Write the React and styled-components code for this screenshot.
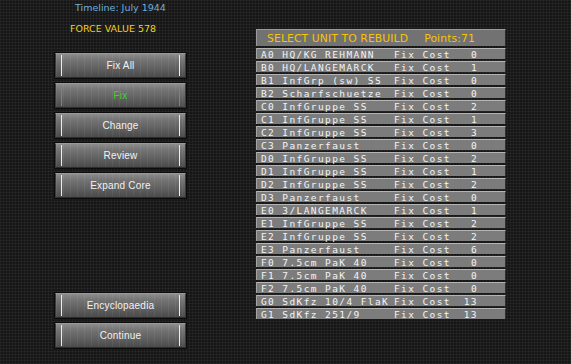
import React from 'react';
import styled, { createGlobalStyle } from 'styled-components';

const GlobalStyle = createGlobalStyle`
    html, body {
        margin: 0;
        padding: 0;
        background: #151515;
    }
`;

const Screen = styled.div`
    width: 571px;
    height: 364px;
    display: flex;
    align-items: flex-start;
    overflow: hidden;
    background-color: #161616;
    background-image:
        repeating-linear-gradient(0deg, rgba(255,255,255,0.045) 0 1px, transparent 1px 3px),
        repeating-linear-gradient(90deg, rgba(255,255,255,0.045) 0 1px, transparent 1px 3px);
    font-family: "DejaVu Sans", "Liberation Sans", sans-serif;
`;

const SideColumn = styled.div`
    width: 131px;
    margin-left: 55px;
    display: flex;
    flex-direction: column;
`;

const Timeline = styled.div`
    margin-top: 2px;
    margin-left: 20px;
    height: 12px;
    font-size: 9.5px;
    line-height: 12px;
    color: #6eaedc;
`;

const ForceValue = styled.div`
    margin-top: 9px;
    margin-left: 15px;
    height: 12px;
    font-size: 9.5px;
    line-height: 12px;
    color: #f2d21a;
`;

const ButtonStack = styled.div`
    display: flex;
    flex-direction: column;
    gap: 5px;
    margin-top: ${p => p.$top}px;
`;

const MenuButton = styled.div`
    position: relative;
    height: 25px;
    box-sizing: border-box;
    display: flex;
    align-items: center;
    justify-content: center;
    font-family: "Liberation Sans", "DejaVu Sans", sans-serif;
    font-size: 10px;
    letter-spacing: 0.2px;
    color: ${p => (p.$active ? '#2ed82e' : '#f2f2f2')};
    background-color: #666;
    background-image:
        repeating-linear-gradient(90deg, rgba(255,255,255,0.05) 0 1px, transparent 1px 7px),
        linear-gradient(180deg, #8c8c8c 0%, #747474 25%, #5c5c5c 70%, #4a4a4a 100%);
    border-top: 1px solid #9a9a9a;
    border-bottom: 1px solid #2c2c2c;
    border-left: 1px solid #3a3a3a;
    border-right: 1px solid #3a3a3a;
    box-shadow: 0 0 0 1px #0c0c0c;

    &::before, &::after {
        content: '';
        position: absolute;
        top: 1px;
        bottom: 1px;
        width: 1px;
        background: ${p => (p.$active ? '#22c422' : '#ececec')};
    }
    &::before { left: 5px; }
    &::after { right: 5px; }
`;

const Panel = styled.div`
    margin-left: 70px;
    margin-top: 29px;
    width: 250px;
    display: flex;
    flex-direction: column;
    gap: 2px;
`;

const TitleBar = styled.div`
    height: 17px;
    box-sizing: border-box;
    display: flex;
    align-items: center;
    padding-left: 10px;
    background: #727272;
    border-top: 1px solid #9c9c9c;
    border-left: 1px solid #9c9c9c;
    border-right: 1px solid #2a2a2a;
    font-size: 10.8px;
    color: #f6c400;
    letter-spacing: 0.1px;
    white-space: pre;
`;

const Points = styled.span`
    margin-left: 16px;
`;

const Row = styled.div`
    height: 11px;
    box-sizing: border-box;
    display: flex;
    align-items: center;
    background: #7c7c7c;
    border-top: 1px solid #b4b4b4;
    border-left: 1px solid #a4a4a4;
    border-right: 1px solid #303030;
    font-family: "DejaVu Sans Mono", "Liberation Mono", monospace;
    font-size: 9.5px;
    color: #f4f4f4;
    letter-spacing: 1.4px;
    white-space: pre;
`;

const RowList = styled.div`
    display: flex;
    flex-direction: column;
    gap: 2px;
`;

const UnitName = styled.span`
    width: 137px;
    padding-left: 4px;
    box-sizing: border-box;
    overflow: hidden;
`;

const CostLabel = styled.span`
    width: 66px;
`;

const CostValue = styled.span`
    width: 18px;
    text-align: right;
`;

const units = [
    ['A0', 'HQ/KG REHMANN', 0],
    ['B0', 'HQ/LANGEMARCK', 1],
    ['B1', 'InfGrp (sw) SS', 0],
    ['B2', 'Scharfschuetze', 0],
    ['C0', 'InfGruppe SS', 2],
    ['C1', 'InfGruppe SS', 1],
    ['C2', 'InfGruppe SS', 3],
    ['C3', 'Panzerfaust', 0],
    ['D0', 'InfGruppe SS', 2],
    ['D1', 'InfGruppe SS', 1],
    ['D2', 'InfGruppe SS', 2],
    ['D3', 'Panzerfaust', 0],
    ['E0', '3/LANGEMARCK', 1],
    ['E1', 'InfGruppe SS', 2],
    ['E2', 'InfGruppe SS', 2],
    ['E3', 'Panzerfaust', 6],
    ['F0', '7.5cm PaK 40', 0],
    ['F1', '7.5cm PaK 40', 0],
    ['F2', '7.5cm PaK 40', 0],
    ['G0', 'SdKfz 10/4 FlaK', 13],
    ['G1', 'SdKfz 251/9', 13],
];

export default function App() {
    return (
        <Screen>
            <GlobalStyle />
            <SideColumn>
                <Timeline>Timeline: July 1944</Timeline>
                <ForceValue>FORCE VALUE 578</ForceValue>
                <ButtonStack $top={18}>
                    <MenuButton>Fix All</MenuButton>
                    <MenuButton $active>Fix</MenuButton>
                    <MenuButton>Change</MenuButton>
                    <MenuButton>Review</MenuButton>
                    <MenuButton>Expand Core</MenuButton>
                </ButtonStack>
                <ButtonStack $top={95}>
                    <MenuButton>Encyclopaedia</MenuButton>
                    <MenuButton>Continue</MenuButton>
                </ButtonStack>
            </SideColumn>
            <Panel>
                <TitleBar>
                    SELECT UNIT TO REBUILD
                    <Points>Points:71</Points>
                </TitleBar>
                <RowList>
                    {units.map(([code, name, cost]) => (
                        <Row key={code}>
                            <UnitName>{code + ' ' + name}</UnitName>
                            <CostLabel>Fix Cost</CostLabel>
                            <CostValue>{cost}</CostValue>
                        </Row>
                    ))}
                </RowList>
            </Panel>
        </Screen>
    );
}
